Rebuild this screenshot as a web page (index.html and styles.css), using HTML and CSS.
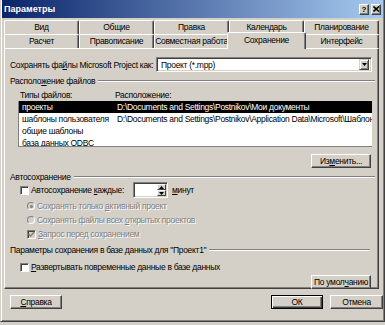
FILE: index.html
```html
<!DOCTYPE html>
<html lang="ru">
<head>
    <meta charset="UTF-8">
    <meta name="viewport" content="width=device-width, initial-scale=1.0">
    <title>Параметры</title>
    <link rel="stylesheet" href="styles.css">
</head>
<body>
    <div class="window">
        <div class="titlebar">
            <span class="title">Параметры</span>
            <div class="caption-buttons">
                <span class="cap-btn">?</span>
                <span class="cap-btn">
                    <svg width="7" height="6" viewBox="0 0 7 6"><path d="M0.5 0.5 L6 5.5 M6 0.5 L0.5 5.5" stroke="#000" stroke-width="1.6"/></svg>
                </span>
            </div>
        </div>

        <div class="tabs">
            <div class="tab-row">
                <div class="tab">Вид</div>
                <div class="tab">Общие</div>
                <div class="tab">Правка</div>
                <div class="tab">Календарь</div>
                <div class="tab">Планирование</div>
            </div>
            <div class="tab-row">
                <div class="tab">Расчет</div>
                <div class="tab">Правописание</div>
                <div class="tab">Совместная работа</div>
                <div class="tab active">Сохранение</div>
                <div class="tab">Интерфейс</div>
            </div>
        </div>

        <div class="panel">
            <div class="format-row">
                <label>Сохранять фа<u>й</u>лы Microsoft Project как:</label>
                <div class="select">
                    <span>Проект (*.mpp)</span>
                    <span class="drop-btn">
                        <svg width="5" height="3" viewBox="0 0 5 3"><path d="M0 0 H5 L2.5 3 Z" fill="#000"/></svg>
                    </span>
                </div>
            </div>

            <div class="group-title">Располо<u>ж</u>ение файлов</div>
            <div class="list-head">
                <span class="col1">Типы файлов:</span>
                <span>Расположение:</span>
            </div>
            <div class="list">
                <div class="list-row selected"><span class="col1">проекты</span><span>D:\Documents and Settings\Postnikov\Мои документы</span></div>
                <div class="list-row"><span class="col1">шаблоны пользователя</span><span>D:\Documents and Settings\Postnikov\Application Data\Microsoft\Шаблоны</span></div>
                <div class="list-row"><span class="col1">общие шаблоны</span><span></span></div>
                <div class="list-row"><span class="col1">база данных ODBC</span><span></span></div>
            </div>
            <div class="btn-line">
                <div class="btn">Из<u>м</u>енить...</div>
            </div>

            <div class="group-title">Автосохранение</div>
            <div class="autosave-row">
                <span class="checkbox"></span>
                <span class="autosave-label">Автосохранение <u>к</u>аждые:</span>
                <span class="spinner">
                    <span class="spin-btns">
                        <span class="spin-btn"><svg width="5" height="3" viewBox="0 0 5 3"><path d="M0 3 H5 L2.5 0 Z" fill="#000"/></svg></span>
                        <span class="spin-btn"><svg width="5" height="3" viewBox="0 0 5 3"><path d="M0 0 H5 L2.5 3 Z" fill="#000"/></svg></span>
                    </span>
                </span>
                <span class="minutes"><u>м</u>инут</span>
            </div>
            <div class="option disabled">
                <span class="radio checked"></span>
                <span>Сохранять только <u>а</u>ктивный проект</span>
            </div>
            <div class="option disabled">
                <span class="radio"></span>
                <span>Сохранять файлы всех <u>о</u>ткрытых проектов</span>
            </div>
            <div class="option disabled">
                <span class="checkbox off">
                    <svg width="7" height="7" viewBox="0 0 7 7"><path d="M0.5 3 L2.5 5 L6.5 1" stroke="#808080" stroke-width="1.5" fill="none"/></svg>
                </span>
                <span><u>З</u>апрос перед сохранением</span>
            </div>

            <div class="group-title short">Параметры сохранения в базе данных для "Проект1"</div>
            <div class="db-row">
                <span class="checkbox"></span>
                <span><u>Р</u>азвертывать повременные данные в базе данных</span>
            </div>
            <div class="btn-line tight">
                <div class="btn">По умол<u>ч</u>анию</div>
            </div>
        </div>

        <div class="footer">
            <div class="btn small"><u>С</u>правка</div>
            <div class="btn small default">ОК</div>
            <div class="btn small wide">Отмена</div>
        </div>
    </div>
</body>
</html>
```

FILE: styles.css
```css
* {
    box-sizing: border-box;
}
body {
    margin: 0;
    background: #d4d0c8;
    font-family: "Liberation Sans", Arial, sans-serif;
    font-size: 8.5px;
    letter-spacing: -0.3px;
    color: #000;
}
u {
    text-underline-offset: 1px;
}
.window {
    width: 385px;
    height: 322px;
    background: #d4d0c8;
    border: 1px solid;
    border-color: #d4d0c8 #404040 #404040 #d4d0c8;
    border-top: 0;
    box-shadow: inset 1px 0 #fff, inset -1px -1px #808080;
    padding: 0 1px 1px 1px;
}
.titlebar {
    height: 18px;
    display: flex;
    align-items: center;
    justify-content: space-between;
    padding: 0 2px 0 2px;
    background: linear-gradient(to right, #0a246a, #a6caf0);
}
.title {
    color: #fff;
    font-weight: bold;
    font-size: 9px;
    letter-spacing: 0;
}
.caption-buttons {
    display: flex;
    gap: 2px;
}
.cap-btn {
    width: 10px;
    height: 11px;
    display: flex;
    align-items: center;
    justify-content: center;
    background: #d4d0c8;
    border: 1px solid;
    border-color: #fff #404040 #404040 #fff;
    box-shadow: inset -1px -1px #808080;
    font-weight: bold;
    font-size: 8px;
    letter-spacing: 0;
}

/* tabs */
.tabs {
    margin: 2px 0 0 2px;
    width: 375px;
}
.tab-row {
    display: grid;
    grid-template-columns: repeat(5, 75px);
    height: 14px;
}
.tab {
    border-top: 1px solid #fff;
    border-left: 1px solid #fff;
    border-right: 1px solid #404040;
    border-radius: 2px 2px 0 0;
    box-shadow: inset -1px 0 #808080;
    background: #d4d0c8;
    text-align: center;
    line-height: 12px;
    white-space: nowrap;
}
.tab.active {
    margin: -2px -2px -1px -2px;
    position: relative;
    z-index: 1;
    line-height: 14px;
}

/* panel */
.panel {
    margin-left: 2px;
    width: 375px;
    height: 241px;
    border: 1px solid;
    border-color: #fff #404040 #404040 #fff;
    box-shadow: inset -1px -1px #808080;
    padding: 8px 6px 0 5px;
}
.format-row {
    display: flex;
    align-items: center;
    height: 15px;
}
.format-row label {
    width: 146px;
    flex: none;
}
.select {
    flex: 1;
    height: 15px;
    display: flex;
    align-items: center;
    justify-content: space-between;
    padding: 2px 2px 2px 4px;
    background: #fff;
    border: 1px solid;
    border-color: #808080 #fff #fff #808080;
    box-shadow: inset 1px 1px #404040, inset -1px -1px #d4d0c8;
}
.drop-btn {
    width: 10px;
    height: 11px;
    display: flex;
    align-items: center;
    justify-content: center;
    background: #d4d0c8;
    border: 1px solid;
    border-color: #d4d0c8 #404040 #404040 #d4d0c8;
    box-shadow: inset 1px 1px #fff, inset -1px -1px #808080;
}
.group-title {
    display: flex;
    align-items: center;
    height: 11px;
    margin-top: 3px;
    white-space: nowrap;
}
.group-title::after {
    content: "";
    flex: 1;
    margin: 0 -3px 0 3px;
    border-top: 1px solid #808080;
    border-bottom: 1px solid #fff;
}
.group-title.short::after {
    margin-right: 2px;
}
.list-head {
    display: flex;
    align-items: center;
    height: 11px;
    margin-top: 3px;
    padding-left: 10px;
}
.col1 {
    width: 95px;
    flex: none;
}
.list {
    margin: 1px 0 0 8px;
    height: 46px;
    overflow: hidden;
    background: #fff;
    border-left: 1px solid #808080;
    border-bottom: 1px solid #808080;
}
.list-row {
    display: flex;
    align-items: center;
    height: 12px;
    padding-left: 3px;
    white-space: nowrap;
}
.list-row.selected {
    background: #000;
    color: #fff;
}
.btn-line {
    display: flex;
    justify-content: flex-end;
    padding-right: 1px;
    margin-top: 7px;
}
.btn-line.tight {
    margin-top: 1px;
}
.btn {
    width: 60px;
    height: 14px;
    display: flex;
    align-items: center;
    justify-content: center;
    border: 1px solid;
    border-color: #fff #404040 #404040 #fff;
    box-shadow: inset -1px -1px #808080;
}
.autosave-row {
    display: flex;
    align-items: center;
    height: 16px;
    padding-left: 10px;
}
.checkbox {
    width: 9px;
    height: 9px;
    flex: none;
    display: flex;
    align-items: center;
    justify-content: center;
    background: #fff;
    border: 1px solid;
    border-color: #808080 #fff #fff #808080;
    box-shadow: inset 1px 1px #404040;
    margin-right: 2px;
}
.checkbox.off {
    background: #d4d0c8;
}
.autosave-label {
    width: 102px;
    flex: none;
}
.spinner {
    width: 35px;
    height: 16px;
    display: flex;
    justify-content: flex-end;
    background: #fff;
    border: 1px solid;
    border-color: #808080 #fff #fff #808080;
    box-shadow: inset 1px 1px #404040, inset -1px -1px #d4d0c8;
    padding: 1px;
}
.spin-btns {
    width: 9px;
    display: flex;
    flex-direction: column;
}
.spin-btn {
    flex: 1;
    display: flex;
    align-items: center;
    justify-content: center;
    background: #d4d0c8;
    border: 1px solid;
    border-color: #fff #404040 #404040 #fff;
}
.minutes {
    margin-left: 4px;
}
.option {
    display: flex;
    align-items: center;
    height: 14px;
    padding-left: 17px;
}
.option:first-of-type {
    margin-top: 1px;
}
.autosave-row + .option {
    margin-top: 1px;
}
.disabled {
    color: #808080;
    text-shadow: 1px 1px #fff;
}
.radio {
    width: 8px;
    height: 8px;
    flex: none;
    margin-right: 2px;
    border-radius: 50%;
    border: 1px solid;
    border-color: #808080 #fff #fff #808080;
    background: #d4d0c8;
    display: flex;
    align-items: center;
    justify-content: center;
}
.radio.checked::after {
    content: "";
    width: 3px;
    height: 3px;
    border-radius: 50%;
    background: #808080;
}
.db-row {
    display: flex;
    align-items: center;
    height: 14px;
    margin-top: 5px;
    padding-left: 10px;
}
.footer {
    display: flex;
    gap: 7px;
    margin-top: 6px;
    padding-left: 8px;
}
.btn.small {
    width: 52px;
}
.btn.wide {
    width: 53px;
}
.btn.default {
    margin-left: auto;
    border-color: #000;
    box-shadow: inset 1px 1px #fff, inset -1px -1px #404040, inset -2px -2px #808080;
}
```
